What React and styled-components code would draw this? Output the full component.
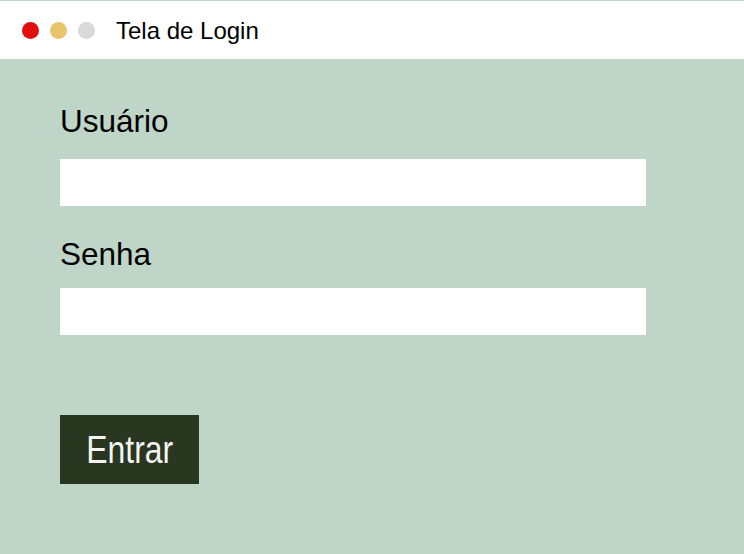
import React from "react";
import styled, { createGlobalStyle } from "styled-components";

const GlobalStyle = createGlobalStyle`
  html, body {
    margin: 0;
    padding: 0;
    background: #bed5c7;
  }
  * {
    box-sizing: border-box;
  }
`;

const Window = styled.div`
  width: 744px;
  height: 554px;
  display: flex;
  flex-direction: column;
  border-top: 1px solid #bed5c7;
  font-family: "Liberation Sans", Arial, sans-serif;
  overflow: hidden;
`;

const TitleBar = styled.div`
  height: 58px;
  background: #ffffff;
  display: flex;
  align-items: center;
  padding-left: 22px;
`;

const Dots = styled.div`
  display: flex;
  gap: 11px;
`;

const Dot = styled.span`
  width: 17px;
  height: 17px;
  border-radius: 50%;
  background: ${(p) => p.color};
`;

const Title = styled.div`
  margin-left: 21px;
  margin-top: 2px;
  font-size: 24px;
  color: #000000;
`;

const Body = styled.form`
  flex: 1;
  background: #bed5c7;
  display: flex;
  flex-direction: column;
  align-items: flex-start;
  padding: 45px 0 0 60px;
`;

const Label = styled.label`
  font-size: 31.5px;
  line-height: 34px;
  color: #000000;
  margin-top: ${(p) => p.$top || 0}px;
`;

const Input = styled.input`
  width: 586px;
  height: 47px;
  border: none;
  outline: none;
  background: #ffffff;
  margin-top: ${(p) => p.$top || 0}px;
  font-size: 20px;
  padding: 0 10px;
`;

const Button = styled.button`
  margin-top: 80px;
  width: 139px;
  height: 69px;
  border: none;
  background: #293720;
  color: #f4f4f4;
  font-family: "Liberation Sans", Arial, sans-serif;
  font-size: 38px;
  padding: 0;
  display: flex;
  align-items: center;
  justify-content: center;
  cursor: pointer;
`;

/* no narrow face installed, so squeeze the regular one */
const Narrow = styled.span`
  display: inline-block;
  transform: scaleX(0.84);
  margin-top: 1px;
`;

export default function App() {
  return (
    <>
      <GlobalStyle />
      <Window>
        <TitleBar>
          <Dots>
            <Dot color="#e20f0f" />
            <Dot color="#e9c46a" />
            <Dot color="#d9d9d9" />
          </Dots>
          <Title>Tela de Login</Title>
        </TitleBar>
        <Body onSubmit={(e) => e.preventDefault()}>
          <Label htmlFor="usuario">Usuário</Label>
          <Input id="usuario" type="text" $top={21} />
          <Label htmlFor="senha" $top={31}>Senha</Label>
          <Input id="senha" type="password" $top={17} />
          <Button type="submit">
            <Narrow>Entrar</Narrow>
          </Button>
        </Body>
      </Window>
    </>
  );
}
